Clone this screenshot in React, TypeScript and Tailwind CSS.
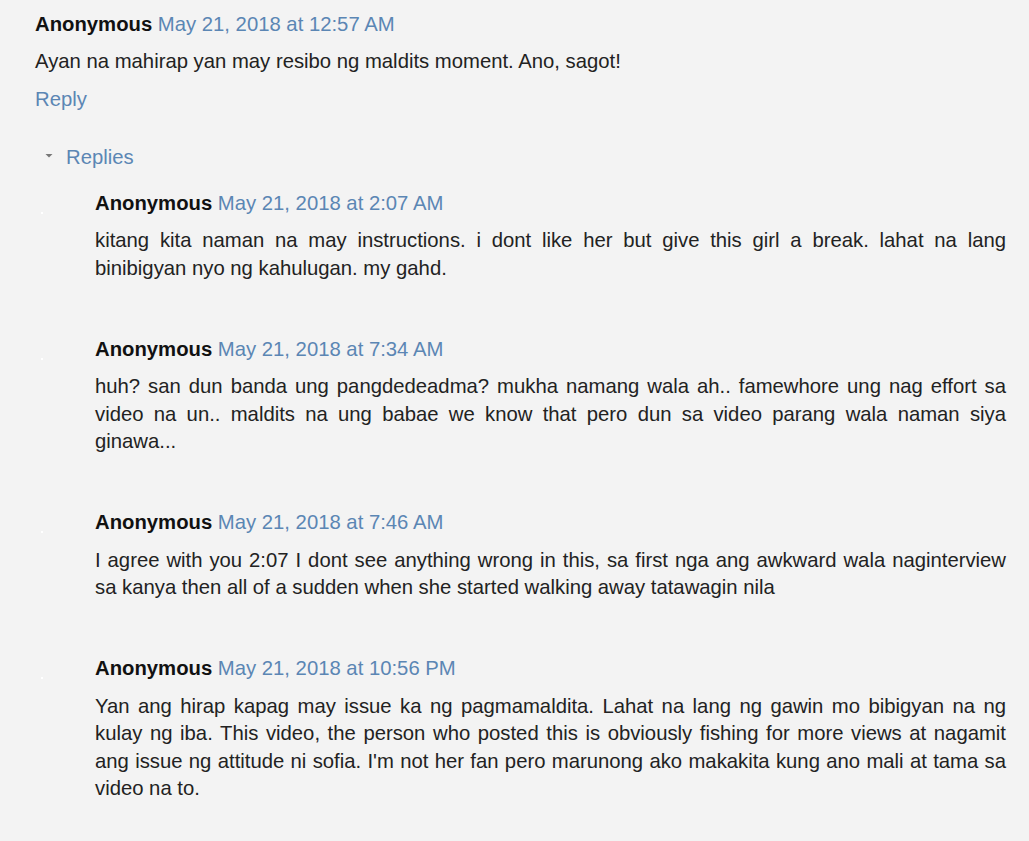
const replies = [
  {
    date: 'May 21, 2018 at 2:07 AM',
    text: 'kitang kita naman na may instructions. i dont like her but give this girl a break. lahat na lang binibigyan nyo ng kahulugan. my gahd.',
  },
  {
    date: 'May 21, 2018 at 7:34 AM',
    text: 'huh? san dun banda ung pangdedeadma? mukha namang wala ah.. famewhore ung nag effort sa video na un.. maldits na ung babae we know that pero dun sa video parang wala naman siya ginawa...',
  },
  {
    date: 'May 21, 2018 at 7:46 AM',
    text: 'I agree with you 2:07 I dont see anything wrong in this, sa first nga ang awkward wala naginterview sa kanya then all of a sudden when she started walking away tatawagin nila',
  },
  {
    date: 'May 21, 2018 at 10:56 PM',
    text: "Yan ang hirap kapag may issue ka ng pagmamaldita. Lahat na lang ng gawin mo bibigyan na ng kulay ng iba. This video, the person who posted this is obviously fishing for more views at nagamit ang issue ng attitude ni sofia. I'm not her fan pero marunong ako makakita kung ano mali at tama sa video na to.",
  },
];

function Header({ date }: { date: string }) {
  return (
    <div className="leading-[27.5px] whitespace-nowrap">
      <span className="font-bold text-[#111]">Anonymous</span>{' '}
      <a className="text-[#5b86b4]">{date}</a>
    </div>
  );
}

export default function App() {
  return (
    <main
      className="min-h-[841px] w-[1029px] bg-[#f3f3f3] text-[#222] text-[20.3px] pt-[11px] pb-10 overflow-hidden"
      style={{ fontFamily: '"Liberation Sans", Arial, sans-serif' }}
    >
      {/* Parent comment */}
      <div className="pl-[35px]">
        <Header date="May 21, 2018 at 12:57 AM" />
        <p className="mt-[9.5px] leading-[27.5px]">
          Ayan na mahirap yan may resibo ng maldits moment. Ano, sagot!
        </p>
        <a className="block mt-[10.5px] leading-[27.5px] text-[#5b86b4]">Reply</a>
      </div>

      {/* Replies toggle */}
      <div className="mt-[30px] pl-[45px] flex items-center leading-[27.5px]">
        <svg width="8" height="6" viewBox="0 0 8 6" className="mr-[13px] -mt-[3px]">
          <path d="M0.5 1 L7.5 1 L4 4.5 Z" fill="#777" />
        </svg>
        <span className="text-[#5b86b4]">Replies</span>
      </div>

      {/* Thread */}
      <div className="mt-[18.5px] flex flex-col gap-[53.5px]">
        {replies.map((r) => (
          <div key={r.date} className="flex">
            <div className="w-[95px] shrink-0 pl-[41px] pt-[22px]">
              <div className="w-[2px] h-[2px] bg-white" />
            </div>
            <div className="w-[911px]">
              <Header date={r.date} />
              <p className="mt-[10px] leading-[27.5px] text-justify">{r.text}</p>
            </div>
          </div>
        ))}
      </div>
    </main>
  );
}
